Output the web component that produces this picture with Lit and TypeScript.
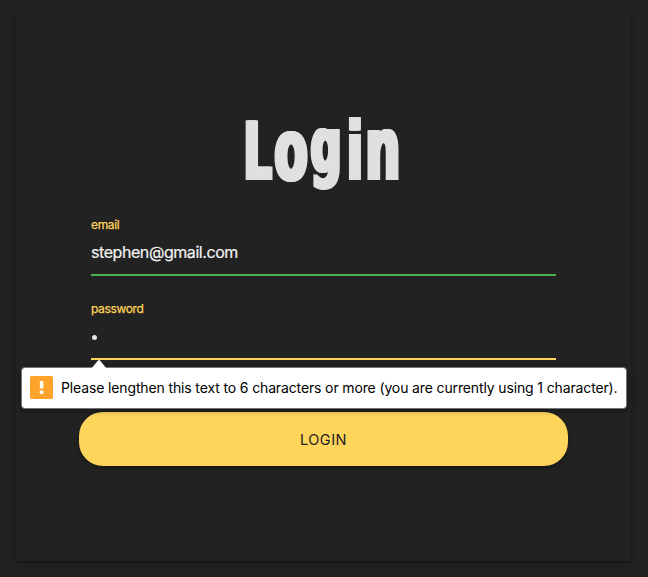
import { LitElement, html, css } from "lit";
import { customElement } from "lit/decorators.js";

@customElement("app-root")
export class AppRoot extends LitElement {
  static styles = css`
    :host {
      display: block;
      box-sizing: border-box;
      height: 577px;
      padding: 13px 17px 16px 16px;
      background: #212121;
      overflow: hidden;
      font-family: Inter, "Liberation Sans", sans-serif;
    }
    .card {
      box-sizing: border-box;
      height: 548px;
      padding: 97px 63px 0 63px;
      border-radius: 2px;
      background: #222;
      box-shadow: 0 2px 2px 0 rgba(0, 0, 0, 0.14), 0 3px 1px -2px rgba(0, 0, 0, 0.12),
        0 1px 5px 0 rgba(0, 0, 0, 0.2);
    }
    h1 {
      margin: 0;
      height: 105px;
      display: flex;
      justify-content: center;
    }
    .title {
      width: 160px;
      height: 90px;
      overflow: visible;
      font-family: "DejaVu Sans", sans-serif;
      font-weight: 700;
      fill: #e0e0e0;
      stroke: #e0e0e0;
      filter: drop-shadow(1.2px 0 0 #e0e0e0) drop-shadow(-1.2px 0 0 #e0e0e0);
    }
    .field {
      position: relative;
      height: 84px;
      margin: 0 12px;
    }
    label {
      display: block;
      height: 21px;
      line-height: 20px;
      font-size: 12px;
      letter-spacing: -0.35px;
      color: #ffd45a;
      -webkit-text-stroke: 0.25px #ffd45a;
    }
    .value {
      box-sizing: border-box;
      height: 40px;
      line-height: 32px;
      font-size: 16px;
      letter-spacing: -0.43px;
      color: #f4f4f4;
      -webkit-text-stroke: 0.2px #f4f4f4;
      border-bottom: 2px solid #4caf50;
    }
    .value.password {
      display: flex;
      border-color: #ffd45a;
    }
    .dot {
      width: 5px;
      height: 5px;
      margin: 15px 0 0 1px;
      border-radius: 50%;
      background: #e4e4e4;
    }
    .tip {
      position: absolute;
      top: 152px;
      left: -70px;
      z-index: 1;
      box-sizing: border-box;
      width: 606px;
      height: 42px;
      padding: 0 9px 2px 8px;
      display: flex;
      align-items: center;
      gap: 8px;
      border: 1px solid #757575;
      border-radius: 4px;
      background: #fff;
      box-shadow: 0 2px 5px rgba(0, 0, 0, 0.35);
      color: #000;
      font-size: 14px;
      letter-spacing: -0.135px;
      white-space: nowrap;
    }
    .arrow {
      position: absolute;
      top: -9px;
      left: 69px;
      width: 16px;
      height: 10px;
    }
    .warn {
      flex: none;
      width: 23px;
      height: 23px;
    }
    button {
      display: block;
      width: 489px;
      height: 54px;
      margin-top: 29px;
      padding: 0;
      border: 0;
      border-radius: 24px;
      background: #ffd45a;
      box-shadow: 0 2px 2px 0 rgba(0, 0, 0, 0.14), 0 3px 1px -2px rgba(0, 0, 0, 0.12),
        0 1px 5px 0 rgba(0, 0, 0, 0.2);
      font: 400 14.5px/56px Inter, sans-serif;
      letter-spacing: 0.5px;
      color: #212121;
    }
  `;

  render() {
    return html`
      <main class="card">
        <h1>
          <svg class="title" viewBox="0 0 160 90" aria-label="Login">
            <text transform="scale(0.56 1)" stroke-width="2"
              ><tspan x="0.4" y="69" font-size="78">L</tspan
              ><tspan x="55.4" y="69.5" font-size="86">o</tspan
              ><tspan x="120" y="61.5" font-size="76">g</tspan
              ><tspan x="185.3" y="69" font-size="80">i</tspan
              ><tspan x="218" y="69" font-size="87">n</tspan
            ></text>
          </svg>
        </h1>
        <div class="field">
          <label>email</label>
          <div class="value">stephen@gmail.com</div>
          <div class="tip" role="alert">
            <svg class="arrow" viewBox="0 0 16 10">
              <path d="M0 10 7 1.5Q8 .5 9 1.5L16 10Z" fill="#fff" />
            </svg>
            <svg class="warn" viewBox="0 0 23 23">
              <rect width="23" height="23" rx="1.5" fill="#ffa32b" />
              <path d="M9.8 5h3.6v7.5h-3.6z" fill="#fff" />
              <circle cx="11.6" cy="16.2" r="2" fill="#fff" />
            </svg>
            <span>Please lengthen this text to 6 characters or more (you are currently using 1 character).</span>
          </div>
        </div>
        <div class="field">
          <label>password</label>
          <div class="value password"><span class="dot"></span></div>
        </div>
        <button>LOGIN</button>
      </main>
    `;
  }
}
